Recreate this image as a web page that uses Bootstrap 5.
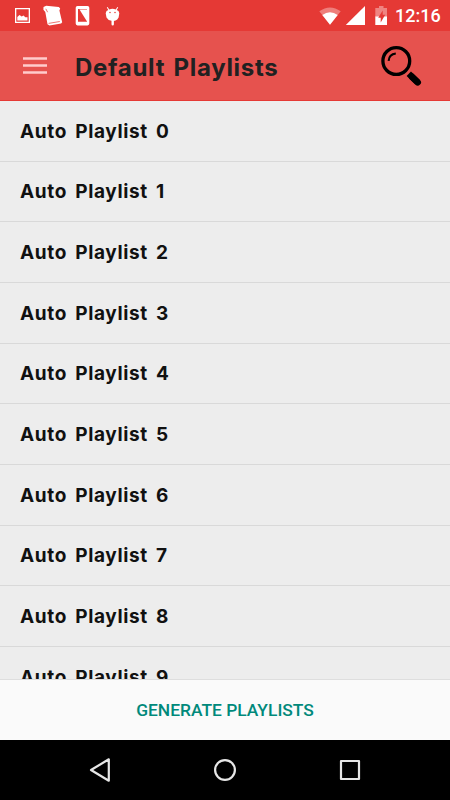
<!DOCTYPE html>
<html lang="en">
<head>
<meta charset="utf-8">
<meta name="viewport" content="width=device-width, initial-scale=1">
<title>Default Playlists</title>
<link href="https://cdn.jsdelivr.net/npm/bootstrap@5.3.0/dist/css/bootstrap.min.css" rel="stylesheet">
<style>
body{height:800px;background:#ededed;font-family:Inter,"Open Sans",sans-serif}
svg{display:block;flex:none}
.status{height:31px;background:#e53935;font-family:Roboto,sans-serif}
.clock{font-size:18px;line-height:32px;font-weight:500;color:#fff;width:46px;white-space:nowrap}
.appbar{height:70px;background:#e6524e;border-bottom:1px solid #e53935}
.title{font-size:24px;line-height:30px;font-weight:700;color:#212121;letter-spacing:.7px;word-spacing:2px;white-space:nowrap}
.playlists{min-height:0}
.playlists .list-group-item{height:60.67px;flex:none;padding:2px 20px 0;background:#ededed;color:#111;border-color:#d9d9d9;font-size:19px;font-weight:700;letter-spacing:.65px;word-spacing:3px;white-space:nowrap}
.generate{height:61px;background:#fafafa;border-top:1px solid #dedede;color:#00897b;font:500 17.4px/61px Roboto,sans-serif}
.sysnav{height:60px;background:#000}
</style>
</head>
<body class="d-flex flex-column overflow-hidden">
<div class="status d-flex flex-shrink-0">
  <svg width="395" height="31" viewBox="0 0 395 31" fill="#fff">
    <path fill-rule="evenodd" d="M15 8h15v15H15zM16.3 9.3v12.4h12.4V9.3z"/>
    <path d="M17.3 20.5v-3.6l2.2-1.8 2.2 1.5 1.800-1 1.800 1.600h2.200v3.300z"/>
    <path d="M43.500 7l2.700-1.200 12.600 1.300 1.400 1.500-.8 2 2.800 11.700-1.100 1.200-11.600 2-2-1.300-2.200-12.200-1.900-2.200z"/>
    <path d="M45.800 8.800l1.800 3.400M48.600 23.400l11.200-1.900" stroke="#e53935" stroke-width=".7"/>
    <path fill-rule="evenodd" d="M77.500 6h10q1.800 0 1.800 1.800v15.800q0 1.800-1.800 1.800h-10q-1.800 0-1.800-1.800V7.800q0-1.800 1.800-1.800zM78 9v12.700h9V9z"/>
    <path d="M79.500 9.500h7.500v12z"/>
    <path d="M106.500 11l1.800-1.100-1.500-2.500.8-.5 1.700 2.500q3.200-1.200 6.400 0l1.700-2.500.8.5-1.500 2.500 1.800 1.100.8 2.300-.7 4.200q-1.200 2.300-3 3-1.200.4-1.700.4v3.300q0 1.200-1.200 1.200t-1.200-1.200v-3.500q-3.500-.3-5-3.200l-.8-4.200z"/>
    <circle cx="110" cy="12.500" r=".75" fill="#e53935"/><circle cx="115" cy="12.500" r=".75" fill="#e53935"/>
    <path opacity=".35" d="M319.300 11.300Q330 3.500 340.700 11.300L330 24.800z"/>
    <path d="M322.300 15Q330 9.500 337.700 15L330 24.800z"/>
    <path d="M365 6v19h-19.200z"/>
    <path opacity=".38" d="M375.300 8h3.700V6h4.500v2h3.500v9h-11.700z"/>
    <path d="M375.300 16.500H387V25h-11.700z"/>
    <path d="M382.700 10.500v4.300h2.500l-4.500 7.600v-4.700h-2.500z" fill="#e53935"/>
  </svg>
  <div class="clock">12:16</div>
</div>
<header class="appbar navbar flex-nowrap justify-content-start flex-shrink-0 p-0">
  <svg width="75" height="69" viewBox="0 31 75 69"><path d="M23 58.500h24M23 65.500h24M23 72.500h24" stroke="#fcc" stroke-width="2.400"/></svg>
  <h1 class="title mb-0 pt-1">Default Playlists</h1>
  <svg class="ms-auto" width="80" height="69" viewBox="370 31 80 69" fill="none" stroke="#000">
    <circle cx="396.300" cy="61" r="13.400" stroke-width="3.300"/>
    <path d="M388.600 60.800q.5-6.500 7.200-7.300" stroke-width="2.100"/>
    <path d="M408.800 73.800l8.700 8.200" stroke-width="6.300"/>
    <path d="M412 76.800l5.700 5.500" stroke-width="6.600" stroke-linecap="round"/>
  </svg>
</header>
<ul class="playlists list-group list-group-flush flex-grow-1 overflow-hidden">
  <li class="list-group-item d-flex align-items-center"><span>Auto Playlist 0</span></li>
  <li class="list-group-item d-flex align-items-center"><span>Auto Playlist 1</span></li>
  <li class="list-group-item d-flex align-items-center"><span>Auto Playlist 2</span></li>
  <li class="list-group-item d-flex align-items-center"><span>Auto Playlist 3</span></li>
  <li class="list-group-item d-flex align-items-center"><span>Auto Playlist 4</span></li>
  <li class="list-group-item d-flex align-items-center"><span>Auto Playlist 5</span></li>
  <li class="list-group-item d-flex align-items-center"><span>Auto Playlist 6</span></li>
  <li class="list-group-item d-flex align-items-center"><span>Auto Playlist 7</span></li>
  <li class="list-group-item d-flex align-items-center"><span>Auto Playlist 8</span></li>
  <li class="list-group-item d-flex align-items-center"><span>Auto Playlist 9</span></li>
</ul>
<button type="button" class="generate btn rounded-0 border-start-0 border-end-0 border-bottom-0 p-0 w-100 flex-shrink-0">GENERATE PLAYLISTS</button>
<nav class="sysnav flex-shrink-0" aria-label="System">
  <svg width="450" height="60" viewBox="0 740 450 60" fill="none" stroke="#e6e6e6" stroke-width="2.200" stroke-linejoin="round">
    <path d="M108.800 759.300v21.400L91 770z"/>
    <circle cx="225" cy="770" r="9.900"/>
    <path d="M341 761h18v18h-18z"/>
  </svg>
</nav>
</body>
</html>
